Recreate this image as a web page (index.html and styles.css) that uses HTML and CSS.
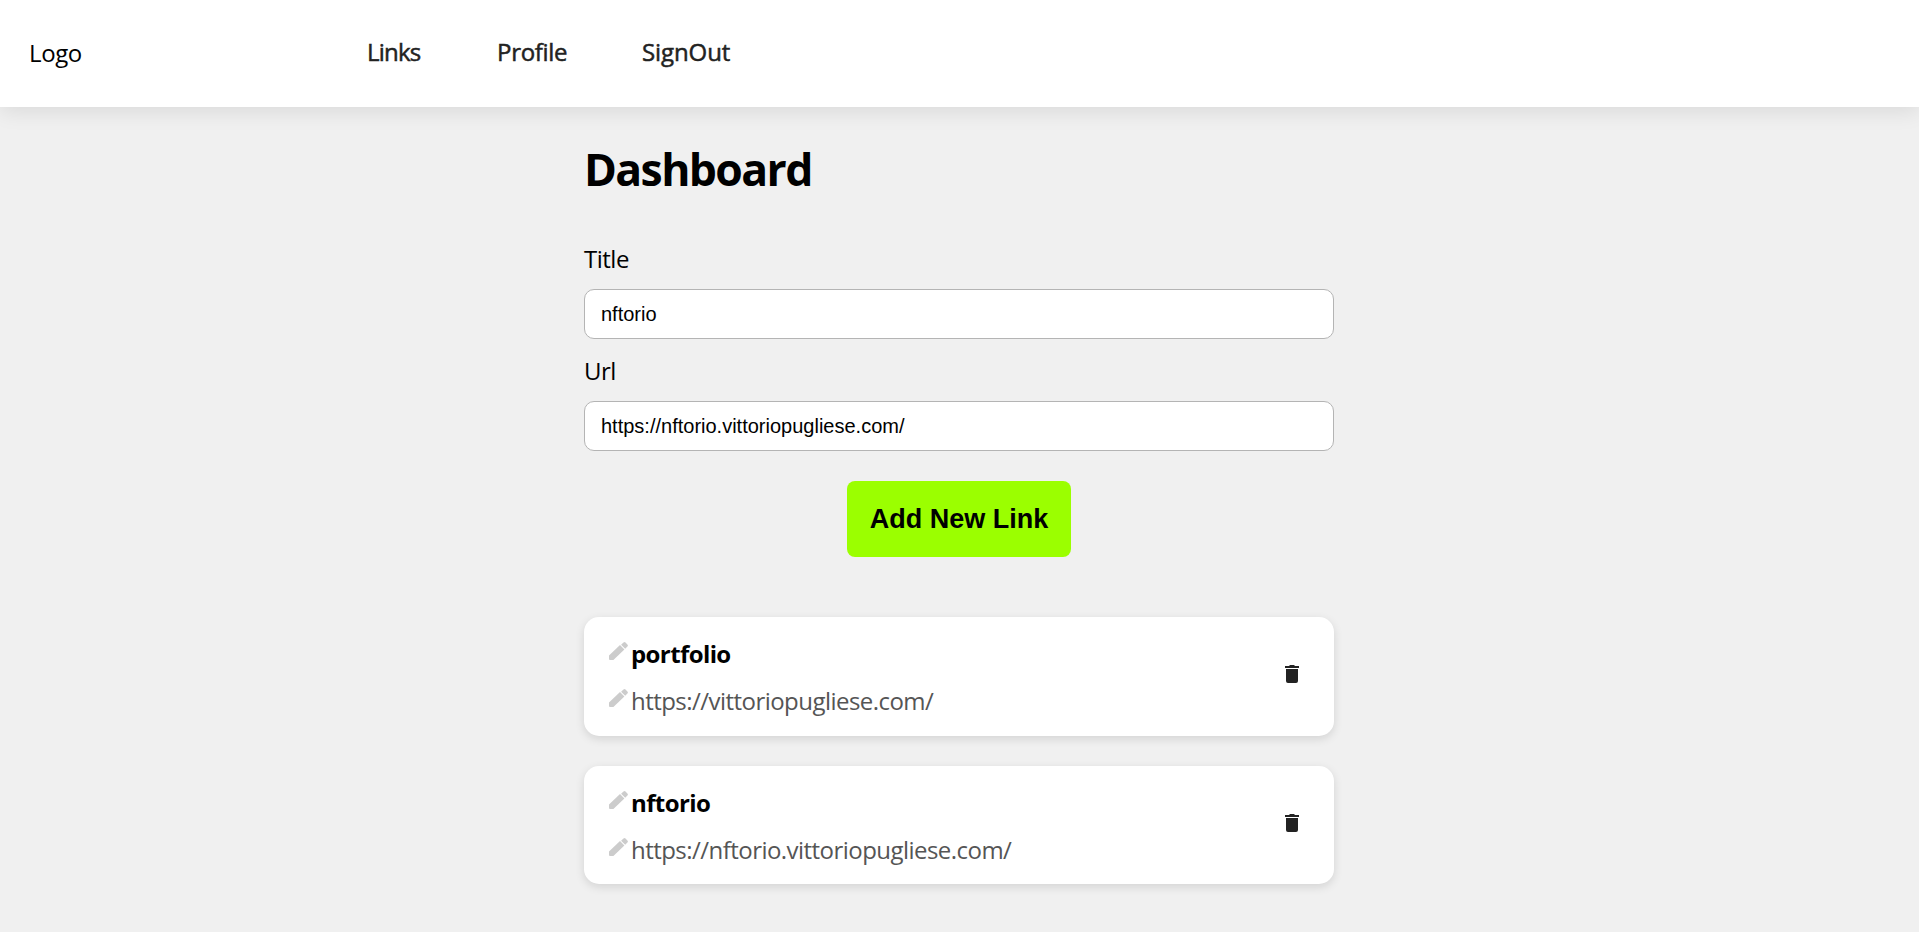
FILE: index.html
```html
<!DOCTYPE html>
<html lang="en">
<head>
<meta charset="utf-8">
<title>Dashboard</title>
<link rel="stylesheet" href="styles.css">
</head>
<body>
<svg class="sprite" aria-hidden="true">
  <symbol id="pencil" viewBox="0 0 19 18"><path d="M0 13.6V17q0 1 1 1h3.4L15.4 7.4 11 3zM18.4 4.5q1-1 0-2L16.5.6q-1-1-2 0l-2.4 2.1 4.1 4z"/></symbol>
  <symbol id="trash" viewBox="0 0 14 18"><path d="M0 1h4l1-1h4l1 1h4v2H0zM1 4h12v12q0 2-2 2H3q-2 0-2-2z"/></symbol>
</svg>
<header class="header">
  <div class="logo">Logo</div>
  <nav class="nav">
    <a class="nav-link links">Links</a>
    <a class="nav-link profile">Profile</a>
    <a class="nav-link signout">SignOut</a>
  </nav>
</header>
<main class="main">
  <h1 class="heading">Dashboard</h1>
  <form class="form">
    <label class="label" for="title">Title</label>
    <input class="input" id="title" type="text" value="nftorio">
    <label class="label" for="url">Url</label>
    <input class="input" id="url" type="text" value="https://nftorio.vittoriopugliese.com/">
    <button class="add" type="button">Add New Link</button>
  </form>
  <section class="cards">
    <article class="card">
      <div class="info">
        <div class="row"><svg class="pencil"><use href="#pencil"/></svg><span class="name">portfolio</span></div>
        <div class="row"><svg class="pencil"><use href="#pencil"/></svg><span class="link">https://vittoriopugliese.com/</span></div>
      </div>
      <svg class="trash"><use href="#trash"/></svg>
    </article>
    <article class="card short">
      <div class="info">
        <div class="row"><svg class="pencil"><use href="#pencil"/></svg><span class="name">nftorio</span></div>
        <div class="row"><svg class="pencil"><use href="#pencil"/></svg><span class="link">https://nftorio.vittoriopugliese.com/</span></div>
      </div>
      <svg class="trash"><use href="#trash"/></svg>
    </article>
  </section>
</main>
</body>
</html>
```
FILE: styles.css
```css
* { box-sizing: border-box; }
body {
  margin: 0;
  height: 932px;
  overflow: hidden;
  background: #f0f0f0;
  color: #000;
  font: 400 24px/32px "Open Sans", sans-serif;
}
.sprite { display: none; }
.header {
  display: flex;
  height: 107px;
  background: #fff;
  box-shadow: 0 5px 20px rgba(0, 0, 0, .09);
}
.logo { width: 366px; padding: 37px 0 0 29px; letter-spacing: -.4px; }
.nav { display: flex; padding-top: 36px; }
.nav-link { color: #222; letter-spacing: -.3px; -webkit-text-stroke: .5px #222; }
.links { width: 130px; padding-left: 1px; letter-spacing: -.8px; }
.profile { width: 146px; padding-left: 1px; }
.signout { letter-spacing: -.1px; }
.main { width: 751px; margin: 0 auto; padding: 31px 1px 0 0; }
.heading { margin: 0 0 44px; font-size: 44.5px; line-height: 61px; font-weight: 700; letter-spacing: -1.6px; }
.form { display: flex; flex-direction: column; }
.label { margin-bottom: 14px; letter-spacing: -.5px; }
.input {
  height: 50px;
  margin-bottom: 16px;
  padding: 0 16px;
  border: 1px solid #b4b4b4;
  border-radius: 10px;
  background: #fff;
  color: #000;
  font: 20px "Liberation Sans", Arial, sans-serif;
}
.add {
  align-self: center;
  width: 224px;
  height: 76px;
  margin-top: 14px;
  padding: 0;
  border: 0;
  border-radius: 8px;
  background: #9bff00;
  color: #000;
  font: 700 27px "Liberation Sans", Arial, sans-serif;
}
.cards { display: flex; flex-direction: column; gap: 30px; margin-top: 60px; }
.card {
  display: flex;
  justify-content: space-between;
  height: 119px;
  padding: 21px 35px 0 24px;
  border-radius: 15px;
  background: #fff;
  box-shadow: 0 3px 10px rgba(0, 0, 0, .12);
}
.short { height: 118px; }
.info { display: flex; flex-direction: column; gap: 15px; }
.row { display: flex; height: 32px; }
.pencil { width: 19px; height: 18px; margin: 4px 3px 0 1px; fill: #ccc; }
.name { font-weight: 700; letter-spacing: -.6px; }
.link { color: #555; letter-spacing: -.54px; }
.trash { width: 14px; height: 18px; margin-top: 27px; fill: #222; }
```
